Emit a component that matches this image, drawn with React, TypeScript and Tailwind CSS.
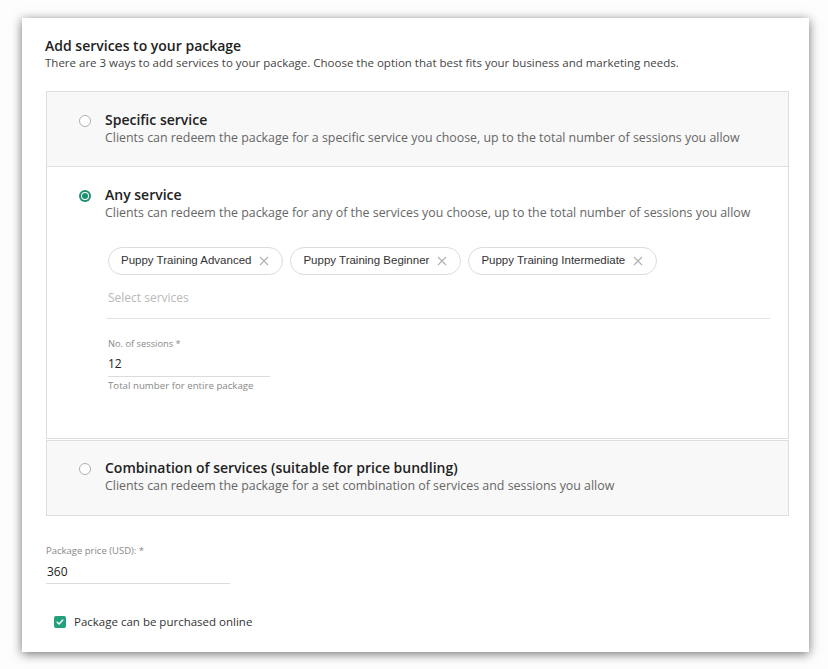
import React from "react";

const font = { fontFamily: '"Open Sans", "Noto Sans", sans-serif' };

function Radio({ checked }: { checked?: boolean }) {
  if (checked) {
    return (
      <span className="mt-[4px] flex h-[12px] w-[12px] shrink-0 items-center justify-center rounded-full bg-[#1f8f74]">
        <span className="flex h-[8px] w-[8px] items-center justify-center rounded-full bg-white">
          <span className="h-[6px] w-[6px] rounded-full bg-[#1f8f74]" />
        </span>
      </span>
    );
  }
  return <span className="mt-[4px] h-[12px] w-[12px] shrink-0 rounded-full border border-[#b0b0b0] bg-white" />;
}

function Chip({ label }: { label: string }) {
  return (
    <div className="flex h-[28px] items-center gap-[8px] rounded-full border border-[#dcdcdc] bg-white pl-[12px] pr-[13px]">
      <span className="text-[11.5px] text-[#333]" style={{ fontFamily: '"Liberation Sans", Arial, sans-serif' }}>
        {label}
      </span>
      <svg width="10" height="10" viewBox="0 0 10 10" className="shrink-0">
        <path d="M1 1L9 9M9 1L1 9" stroke="#b0b0b0" strokeWidth="1.1" />
      </svg>
    </div>
  );
}

export default function App() {
  return (
    <div className="min-h-[669px] w-[828px] bg-[#fdfdfd] pt-[18px]" style={font}>
      <div className="ml-[22px] h-[634px] w-[787px] bg-white px-[23px] pt-[19px] shadow-[0_2px_10px_rgba(0,0,0,0.55)]">
        <h2 className="text-[14px] font-semibold leading-[18px] text-[#222]">Add services to your package</h2>
        <p className="text-[11.5px] leading-[16px] text-[#444]">
          There are 3 ways to add services to your package. Choose the option that best fits your business and marketing needs.
        </p>

        <div className="ml-[1px] mt-[20px] flex w-[743px] flex-col">
          {/* Option 1 */}
          <div className="flex h-[76px] gap-[14px] border border-[#dedede] bg-[#f8f8f8] pl-[32px] pt-[19px]">
            <Radio />
            <div>
              <div className="text-[14px] font-semibold leading-[18px] text-[#222]">Specific service</div>
              <div className="text-[12.4px] leading-[18px] text-[#666]">
                Clients can redeem the package for a specific service you choose, up to the total number of sessions you allow
              </div>
            </div>
          </div>

          {/* Option 2 */}
          <div className="h-[272px] border border-t-0 border-[#dedede] bg-white pl-[32px] pr-[18px] pt-[19px]">
            <div className="flex gap-[14px]">
              <Radio checked />
              <div className="flex-1">
                <div className="text-[14px] font-semibold leading-[18px] text-[#222]">Any service</div>
                <div className="text-[12.4px] leading-[18px] text-[#666]">
                  Clients can redeem the package for any of the services you choose, up to the total number of sessions you allow
                </div>
              </div>
            </div>
            <div className="ml-[27px] mt-[25px]">
              <div className="flex gap-[7px] pl-[2px]">
                <Chip label="Puppy Training Advanced" />
                <Chip label="Puppy Training Beginner" />
                <Chip label="Puppy Training Intermediate" />
              </div>
              <div className="mt-[14px] border-b border-[#e2e2e2] pb-[11px] pl-[2px] text-[12px] leading-[18px] text-[#b8b8b8]">
                Select services
              </div>
              <div className="ml-[2px] mt-[19px] w-[162px]">
                <div className="text-[9.3px] leading-[12px] text-[#888]">No. of sessions *</div>
                <div className="border-b border-[#dcdcdc] pb-[3px] pt-[5px] text-[12px] leading-[18px] text-[#222]">12</div>
                <div className="pt-[2px] text-[9.7px] leading-[14px] text-[#888]">Total number for entire package</div>
              </div>
            </div>
          </div>

          {/* Option 3 */}
          <div className="mt-[1px] flex h-[76px] gap-[14px] border border-[#dedede] bg-[#f8f8f8] pl-[32px] pt-[18px]">
            <Radio />
            <div>
              <div className="text-[14px] font-semibold leading-[18px] text-[#222]">
                Combination of services (suitable for price bundling)
              </div>
              <div className="text-[12.4px] leading-[18px] text-[#666]">
                Clients can redeem the package for a set combination of services and sessions you allow
              </div>
            </div>
          </div>
        </div>

        <div className="ml-[1px] mt-[29px] w-[184px]">
          <div className="text-[9.5px] leading-[12px] text-[#888]">Package price (USD): *</div>
          <div className="border-b border-[#dcdcdc] pb-[2px] pl-[1px] pt-[6px] text-[12px] leading-[18px] text-[#222]">360</div>
        </div>

        <label className="ml-[9px] mt-[29px] flex items-center gap-[8px]">
          <span className="flex h-[12px] w-[12px] items-center justify-center rounded-[2px] bg-[#24a07d]">
            <svg width="8" height="8" viewBox="0 0 8 8">
              <path d="M1.2 4.2L3.1 6L6.8 2" stroke="white" strokeWidth="1.4" fill="none" strokeLinecap="round" strokeLinejoin="round" />
            </svg>
          </span>
          <span className="text-[11.5px] leading-[18px] text-[#333]">Package can be purchased online</span>
        </label>
      </div>
    </div>
  );
}
